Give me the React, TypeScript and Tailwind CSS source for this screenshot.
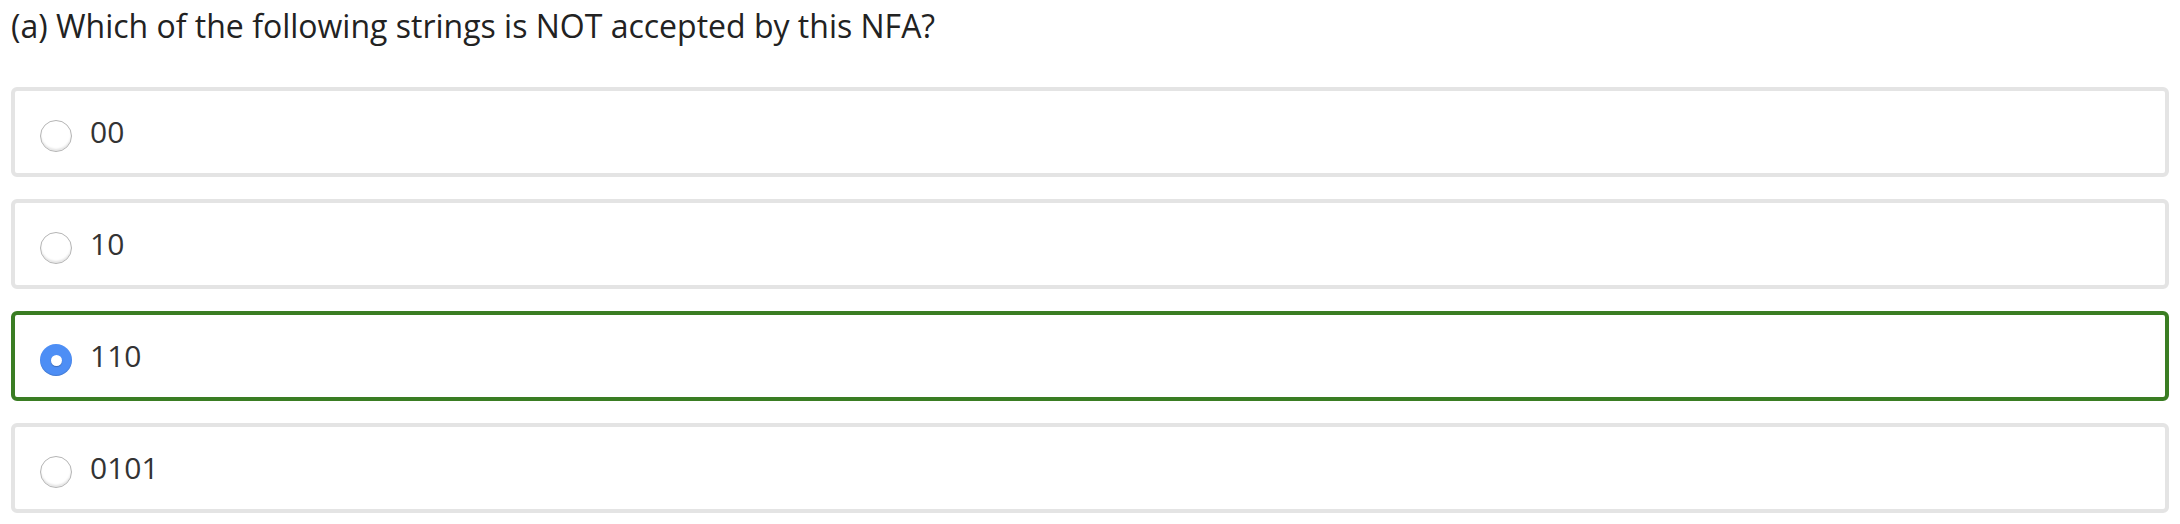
import { useState } from "react";

const options = ["00", "10", "110", "0101"];

function Radio({ checked }: { checked: boolean }) {
  if (checked) {
    return (
      <span className="flex h-[32px] w-[32px] shrink-0 items-center justify-center rounded-full bg-[#4d8ef5] shadow-[inset_0_-1px_1px_rgba(0,0,0,0.15)]">
        <span className="block h-[11px] w-[11px] rounded-full bg-white shadow-[0_1px_1px_rgba(0,0,0,0.25)]" />
      </span>
    );
  }
  return (
    <span className="block h-[32px] w-[32px] shrink-0 rounded-full border border-[#b5b5b5] bg-white shadow-[inset_0_-2px_2px_rgba(0,0,0,0.1)]" />
  );
}

export default function App() {
  const [selected, setSelected] = useState(2);

  return (
    <div className="min-h-screen bg-white px-[11px] pt-[5px] font-['Open_Sans',sans-serif] text-[#222]">
      <h2 className="text-[32px] leading-[42px]">
        (a) Which of the following strings is NOT accepted by this NFA?
      </h2>

      <div className="mt-[40px] flex flex-col gap-[22px]">
        {options.map((opt, i) => (
          <label
            key={opt}
            onClick={() => setSelected(i)}
            className={`flex h-[90px] cursor-pointer items-center gap-[18px] rounded-[6px] border-[4px] pl-[25px] ${
              selected === i ? "border-[#3a7d23]" : "border-[#e4e4e4]"
            }`}
          >
            <span className="mt-[8px] block">
              <Radio checked={selected === i} />
            </span>
            <span className="text-[30px] leading-[40px] text-[#333]">{opt}</span>
          </label>
        ))}
      </div>
    </div>
  );
}
